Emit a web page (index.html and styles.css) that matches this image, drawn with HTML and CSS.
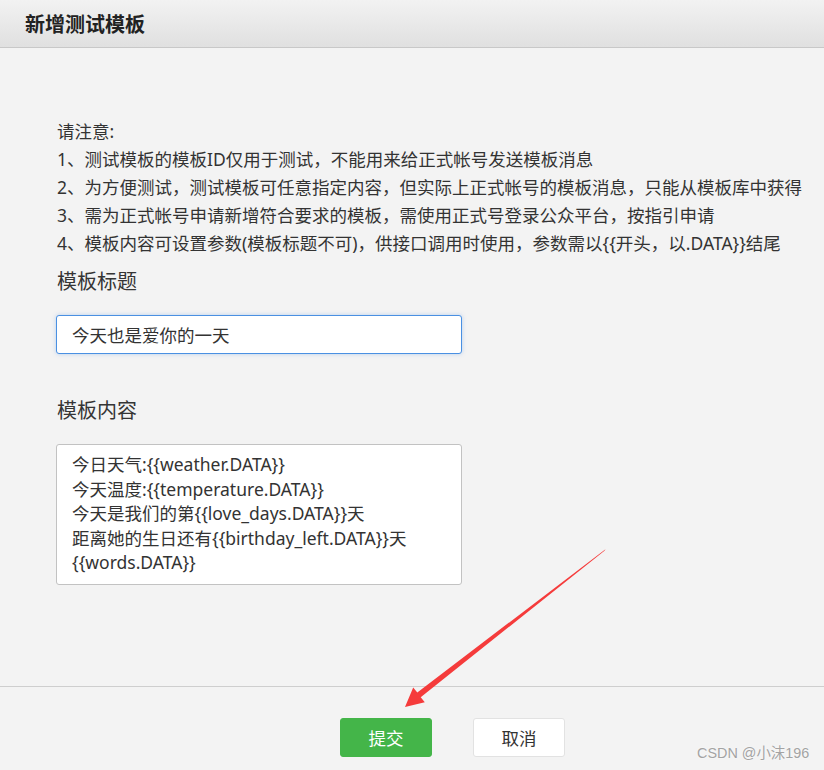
FILE: index.html
```html
<!DOCTYPE html>
<html lang="zh-CN">
<head>
<meta charset="utf-8">
<title>新增测试模板</title>
<link rel="stylesheet" href="styles.css">
</head>
<body>
<div class="page">
  <header class="dialog-header">
    <h1 class="dialog-title">新增测试模板</h1>
  </header>
  <main class="dialog-body">
    <div class="notice">
      <p>请注意:</p>
      <p>1、测试模板的模板ID仅用于测试，不能用来给正式帐号发送模板消息</p>
      <p>2、为方便测试，测试模板可任意指定内容，但实际上正式帐号的模板消息，只能从模板库中获得</p>
      <p>3、需为正式帐号申请新增符合要求的模板，需使用正式号登录公众平台，按指引申请</p>
      <p>4、模板内容可设置参数(模板标题不可)，供接口调用时使用，参数需以{{开头，以.DATA}}结尾</p>
    </div>
    <div class="field">
      <label class="field-label">模板标题</label>
      <input class="text-input" type="text" value="今天也是爱你的一天">
    </div>
    <div class="field field-content">
      <label class="field-label">模板内容</label>
      <textarea class="text-area">今日天气:{{weather.DATA}}
今天温度:{{temperature.DATA}}
今天是我们的第{{love_days.DATA}}天
距离她的生日还有{{birthday_left.DATA}}天
{{words.DATA}}</textarea>
    </div>
  </main>
  <footer class="dialog-footer">
    <button class="btn btn-primary">提交</button>
    <button class="btn btn-default">取消</button>
  </footer>
  <svg class="arrow" width="824" height="770" viewBox="0 0 824 770">
    <polygon points="605.5,549.2 417.3,692.4 413.2,687.6 405,707 424.8,702.2 420.7,697.2 604.5,550.8" fill="#f53b3b"/>
  </svg>
  <div class="watermark">CSDN @小沫196</div>
</div>
</body>
</html>
```

FILE: styles.css
```css
* {
  box-sizing: border-box;
}

html, body {
  margin: 0;
  padding: 0;
}

body {
  background: #f3f3f3;
  font-family: "Noto Sans", "Noto Sans CJK SC", sans-serif;
  color: #333;
}

.page {
  position: relative;
  width: 824px;
  height: 770px;
  overflow: hidden;
}

.dialog-header {
  height: 48px;
  background: linear-gradient(#f2f2f2, #e0e0e0);
  border-bottom: 1px solid #c8c8c8;
  padding-left: 25px;
  display: flex;
  align-items: center;
}

.dialog-title {
  margin: 0;
  font-family: "Noto Sans CJK SC", sans-serif;
  font-size: 20px;
  font-weight: bold;
  color: #222;
  line-height: 28px;
}

.dialog-body {
  padding: 69px 0 0 57px;
  height: 638px;
}

.notice p {
  margin: 0;
  font-size: 17.5px;
  line-height: 28px;
  color: #333;
}

.field {
  display: flex;
  flex-direction: column;
  align-items: flex-start;
  margin-top: 10px;
}

.field-content {
  margin-top: 42px;
}

.field-label {
  font-family: "Noto Sans CJK SC", sans-serif;
  font-size: 20px;
  line-height: 28px;
  color: #353535;
}

.text-input {
  margin: 20px 0 0 -1px;
  width: 406px;
  height: 39px;
  border: 1px solid #4a90e2;
  border-radius: 3px;
  box-shadow: 0 0 4px rgba(74, 144, 226, 0.35);
  background: #fff;
  padding: 0 15px;
  font-family: "Noto Sans", "Noto Sans CJK SC", sans-serif;
  font-size: 17.5px;
  color: #333;
  outline: none;
}

.text-area {
  margin: 20px 0 0 -1px;
  width: 406px;
  height: 141px;
  border: 1px solid #c2c2c2;
  border-radius: 3px;
  background: #fff;
  padding: 7px 15px;
  font-family: "Noto Sans", "Noto Sans CJK SC", sans-serif;
  font-size: 17.5px;
  line-height: 24.5px;
  color: #333;
  resize: none;
  overflow: hidden;
  outline: none;
}

.dialog-footer {
  border-top: 1px solid #cecece;
  padding: 31px 0 0 340px;
  display: flex;
  gap: 41px;
}

.btn {
  width: 92px;
  height: 39px;
  border-radius: 3px;
  font-family: "Noto Sans CJK SC", sans-serif;
  font-size: 17.5px;
  cursor: pointer;
  padding: 0;
}

.btn-primary {
  background: #44b549;
  border: 1px solid #44b549;
  color: #fff;
}

.btn-default {
  background: #fff;
  border: 1px solid #e2e2e2;
  color: #333;
}

.arrow {
  position: absolute;
  left: 0;
  top: 0;
  pointer-events: none;
}

.watermark {
  position: absolute;
  left: 697px;
  top: 744px;
  font-family: "Liberation Sans", "Noto Sans CJK SC", sans-serif;
  font-size: 14.4px;
  line-height: 18px;
  color: #a3a3a3;
  text-shadow: 0 0 2px #fff;
  white-space: nowrap;
}
```
